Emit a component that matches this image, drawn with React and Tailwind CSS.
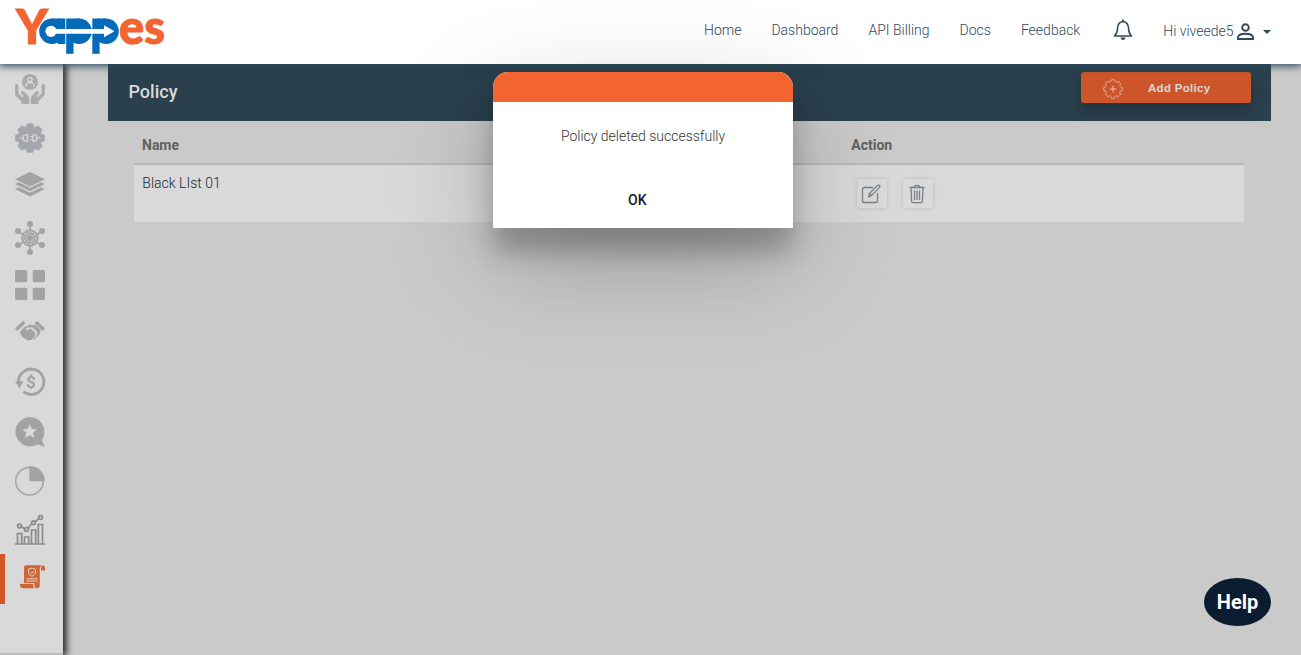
import React from "react";

const navItems = ["Home", "Dashboard", "API Billing", "Docs", "Feedback"];

function Logo() {
  return (
    <svg width="180" height="64" viewBox="0 0 180 64" overflow="visible" role="img" aria-label="Yappes">
      <g fontFamily="Lato, sans-serif" fontWeight="900" fontSize="48" stroke="#f26430" strokeWidth="1">
        <text x="16" y="43.500" fill="#f26430" textLength="32" lengthAdjust="spacingAndGlyphs">Y</text>
        <text x="119" y="43.500" fill="#f26430" textLength="46" lengthAdjust="spacingAndGlyphs">es</text>
      </g>
      <g fill="#056bb8">
        <circle cx="52" cy="31.3" r="12.8" />
        <circle cx="79" cy="31.3" r="12.8" />
        <circle cx="106" cy="31.3" r="12.8" />
        <rect x="58" y="18.500" width="7.300" height="25.500" />
        <rect x="66.200" y="18.500" width="7.300" height="35.300" />
        <rect x="92.300" y="18.500" width="7.300" height="35.300" />
        <rect x="52" y="18.500" width="8" height="8" />
        <rect x="73" y="18.500" width="7" height="8" />
        <rect x="98" y="18.500" width="8" height="8" />
      </g>
      <circle cx="51" cy="31.300" r="5.600" fill="#fff" />
      <path d="M50 28.900H104V25.300l10.500 6-10.500 6v-3.600H50z" fill="#fff" />
    </svg>
  );
}

function Gear({ r1, r2, teeth = 8, ...rest }) {
  const pts = [];
  for (let i = 0; i < teeth; i++) {
    const a = (i * 2 * Math.PI) / teeth;
    [[-0.3, r2], [-0.17, r1], [0.17, r1], [0.3, r2]].forEach(([d, r]) =>
      pts.push(`${(15 + r * Math.sin(a + d)).toFixed(2)},${(15 - r * Math.cos(a + d)).toFixed(2)}`)
    );
  }
  return <polygon points={pts.join(" ")} strokeLinejoin="round" {...rest} />;
}

const icons = [
  {
    box: "h-[49px]",
    art: (
      <>
        <circle cx="15" cy="8" r="8" fill="#ababab" />
        <circle cx="15" cy="5.6" r="2.1" fill="none" stroke="#d9d9d9" strokeWidth="1.3" />
        <path d="M11 13V11.5Q11 8.6 15 8.6T19 11.5V13" fill="none" stroke="#d9d9d9" strokeWidth="1.3" />
        <path d="M0 11.5q0-1.5 1.7-1.5t1.7 1.5v8l4.2 3.8 1.2-1-2.7-2.8q-.6-1.8 1.2-2.6l1.5.3 4.7 5q.7.8.7 2V30H6.5v-2.5L.7 21.8Q0 21 0 20zM30 11.5q0-1.5-1.7-1.5t-1.7 1.5v8l-4.2 3.8-1.2-1 2.7-2.8q.6-1.8-1.2-2.6l-1.5.3-4.7 5q-.7.8-.7 2V30h7.5v-2.5l5.8-5.7q.7-.8.7-1.8z" fill="#ababab" />
      </>
    ),
  },
  {
    box: "h-[46px]",
    art: (
      <>
        <Gear r1={14.2} r2={11.5} fill="#a5a7ad" stroke="#a5a7ad" strokeWidth="1.6" />
        <g fill="none" stroke="#d9d9d9" strokeWidth="1.2">
          <path d="M4.5 15H8M12.5 11.5H11Q8 12 8 15t3 3.5h1.5zM22 15h3.5M18 11.5h1q3 .5 3 3.5t-3 3.5h-1zM18 13.5h-3M18 16.5h-3" />
        </g>
      </>
    ),
  },
  {
    box: "h-[54px]",
    art: (
      <g fill="#a3a3a3">
        <path d="M15 3L30 10.3 15 17.5 0 10.3z" />
        <path d="M0 15l3.7-1.8L15 18.7l11.3-5.5L30 15 15 22.3z" />
        <path d="M0 20l3.7-1.8L15 23.7l11.3-5.5L30 20 15 27.5z" />
      </g>
    ),
  },
  {
    box: "h-[47px]",
    art: (
      <g stroke="#a3a3a3" fill="#a3a3a3">
        <path d="M15-1v32M2 8l26 15M28 8L2 23" strokeWidth="1.6" />
        <circle cx="15" cy="15" r="8.2" strokeWidth="1" />
        <circle cx="15" cy="15" r="6.2" fill="none" stroke="#d3d3d3" strokeWidth="1.2" strokeDasharray="2.5 1.2" />
        <circle cx="15" cy="15" r="3.6" fill="none" stroke="#cdcdcd" strokeWidth=".8" />
        <g stroke="none">
          <circle cx="15" cy="1" r="3" /><circle cx="15" cy="29" r="3" />
          <circle cx="3" cy="8" r="3" /><circle cx="27" cy="8" r="3" />
          <circle cx="3" cy="22" r="3" /><circle cx="27" cy="22" r="3" />
        </g>
      </g>
    ),
  },
  {
    box: "h-[46px]",
    art: (
      <g fill="#a3a3a3">
        <rect x="0" y="0" width="12.3" height="12.3" rx="1.6" /><rect x="17.7" y="0" width="12.3" height="12.3" rx="1.6" />
        <rect x="0" y="17.7" width="12.3" height="12.3" rx="1.6" /><rect x="17.7" y="17.7" width="12.3" height="12.3" rx="1.6" />
      </g>
    ),
  },
  {
    box: "h-[51px]",
    art: (
      <g fill="#a3a3a3">
        <path d="M1.2 13.8L9.3 6M20.700 6l8.100 7.800" stroke="#a3a3a3" strokeWidth="3.4" fill="none" />
        <path d="M5 15.5l5.3-5.2 3 .2-2.7 2.8q1.400 1.500 3.400.2l1.700-1 4.600 4.500q.9 1.500-.5 2.500l-.3 2-1.900 1-1 1.400-2 .2-1.800.7-5.500-4.100Q4.700 18 5 15.500z" />
        <path d="M13 9.3q2-1.500 4-.3h3.600l4.800 4.700q.6 5-4.200 7.700-.5 2.500-3.500 2.500 3-2 3.700-4.200 1.900-2.600-.1-4.700l-4.400-4-3.700 1z" />
      </g>
    ),
  },
  {
    box: "h-[50px]",
    art: (
      <>
        <path d="M3.500 15a12.700 12.700 0 1 1 4.800 9.700" fill="none" stroke="#a3a3a3" strokeWidth="2.800" />
        <path d="M0 14.200h8.500L4.400 21.500z" fill="#a3a3a3" />
        <text x="16" y="21" textAnchor="middle" fontFamily="Roboto, sans-serif" fontWeight="700" fontSize="17" fill="#a3a3a3">$</text>
      </>
    ),
  },
  {
    box: "h-[49px]",
    art: (
      <>
        <path d="M14.7 0a14.700 14.700 0 0 1 14.200 18.500q-.7 2.700-2 4.700L30 30l-7.300-2.700A14.700 14.700 0 1 1 14.700 0z" fill="#a3a3a3" />
        <path d="M14.700 7.200l2.100 4.700 5.200.5-3.900 3.400 1.200 5.200-4.600-2.700-4.600 2.700 1.200-5.200-3.900-3.400 5.200-.5z" fill="#d9d9d9" />
      </>
    ),
  },
  {
    box: "h-[49px]",
    art: (
      <>
        <circle cx="14.500" cy="15.300" r="13.800" fill="none" stroke="#a3a3a3" strokeWidth="1.500" />
        <path d="M14.300 0A15 15 0 0 1 29.800 15.200H14.300z" fill="#a3a3a3" />
      </>
    ),
  },
  {
    box: "h-[49px]",
    art: (
      <g fill="none" stroke="#8b8b8b" strokeWidth="1.700">
        <path d="M0 29h30M2.500 29V18.500H6.700V29M9.500 29V22h4.200v7M16.500 29V15h4.200v14M23.300 29V9.500h4.200V29" />
        <path d="M6 11.800l3.700 1.900M13 13l4-4.500M20.300 6.500l3.500-2.800" />
        <circle cx="4.500" cy="11" r="1.900" /><circle cx="11.500" cy="14.500" r="1.900" />
        <circle cx="18.500" cy="7.700" r="1.900" /><circle cx="25.500" cy="2.500" r="1.900" />
      </g>
    ),
  },
];

function PolicyIcon() {
  return (
    <svg width="26" height="24" viewBox="0 0 26 24">
      <path d="M4 18V2.500Q4 .3 6.300.3H22q-2.200 1-2.200 3V20q0 3.200-3 3.300-2.500 0-2.500-3.300v-2z" fill="#cf6435" />
      <path d="M0 18.800h13.300v1.500q0 2 1 3H3.200Q0 23 0 20.300zM21 5.500V3q0-2.500 2-2.500t2 2.200v2.800z" fill="#cf6435" />
      <g fill="none" stroke="#e0d2ca">
        <path d="M12 3l3.500 1.200V7.500Q15.300 10 12 11.400 8.700 10 8.500 7.500V4.200z" strokeWidth="1" />
        <path d="M10.500 7l1.200 1.300 2-2.300" strokeWidth="1" />
        <path d="M6.500 13.800h11M6.500 16h11" strokeWidth="1" />
        <path d="M0 18.500h13.600v2q.2 2.200 1.500 2.700" strokeWidth=".7" />
      </g>
    </svg>
  );
}

function Sidebar() {
  return (
    <aside className="relative z-10 flex w-[63px] shrink-0 flex-col border-b-2 border-[#bcbcbc] bg-[#d9d9d9] shadow-[3px_0_6px_1px_rgba(0,0,0,0.75)]">
      <div className="h-[10px] shrink-0" />
      {icons.map((icon, i) => (
        <div key={i} className={`${icon.box} shrink-0 pl-[15px]`}>
          <svg width="30" height="30" viewBox="0 0 30 30" overflow="visible">{icon.art}</svg>
        </div>
      ))}
      <div className="-mt-[10px] flex h-[50px] shrink-0 items-center border-l-5 border-[#d15728] pb-[5px] pl-[15px]">
        <PolicyIcon />
      </div>
    </aside>
  );
}

function Header() {
  return (
    <header className="relative z-20 flex h-16 shrink-0 items-center bg-white pr-[30px] text-[#2b4a5c] shadow-[0_1px_8px_1px_#2b4a5c]">
      <Logo />
      <nav className="-mt-1 ml-auto flex gap-[30px] text-[14px] font-light">
        {navItems.map((item) => <a key={item}>{item}</a>)}
      </nav>
      <svg className="-mt-1 ml-[33px]" width="20" height="22" viewBox="0 0 20 22" fill="none" stroke="#2b4a5c" strokeWidth="1.500" strokeLinejoin="round">
        <path d="M10 2.500Q15 3 15.500 9q0 5 3 8H1.500q3-3 3-8Q5 3 10 2.500z" />
        <path d="M10 .5v2" strokeWidth="1.800" />
        <path d="M7.500 18.500h5q-.5 2.500-2.500 2.500t-2.500-2.500z" fill="#2b4a5c" stroke="none" />
      </svg>
      <span className="-mt-0.5 ml-[30px] text-[14px] font-light">Hi viveede5</span>
      <svg className="-mt-px ml-[3px]" width="17" height="17" viewBox="0 0 17 17" fill="none" stroke="#2b4a5c" strokeWidth="1.900">
        <circle cx="8.500" cy="4.500" r="3.300" />
        <path d="M1 16v-1.700Q1.500 10.800 8.500 10.800T16 14.300V16z" />
      </svg>
      <svg className="ml-[9.5px]" width="8" height="4" viewBox="0 0 8 4"><path d="M0 0h8L4 4z" fill="#2b4a5c" /></svg>
    </header>
  );
}

function ActionButton({ children }) {
  return (
    <button className="flex h-[29px] w-[30px] items-center justify-center rounded-[3px] bg-[#dadada] shadow-[0_0_4px_rgba(0,0,0,0.15)]">
      <svg className="-ml-px" width="20" height="20" viewBox="0 0 20 20" fill="none" stroke="#7b8087" strokeWidth="1.300" strokeLinejoin="round">{children}</svg>
    </button>
  );
}

function PolicyPanel() {
  return (
    <main className="ml-[45px] w-[1163px]">
      <div className="flex h-[57px] justify-between bg-[#2a404d] pl-[20.5px] pr-5">
        <h1 className="pt-[15px] text-[18px] font-medium leading-[26px] text-[#d9d9d9]">Policy</h1>
        <button className="mt-2 flex h-[31px] w-[170px] items-center rounded-[3px] bg-[#cd5529] pl-[22px] font-['Liberation_Sans',sans-serif] text-[11.5px] font-bold tracking-[0.300px] text-[#d9d9d9] shadow-[0_8px_16px_rgba(0,0,0,0.2)]">
          <svg className="mt-[2px]" width="20" height="20" viewBox="0 0 30 30">
            <Gear r1={14} r2={11.500} fill="none" stroke="#dfb5a5" strokeWidth="1.400" />
            <path d="M15 10v10M10 15h10" stroke="#e3c4b8" strokeWidth="1.500" />
          </svg>
          <span className="ml-[25px] mt-[2px]">Add Policy</span>
        </button>
      </div>
      <div className="mx-[26px] w-[1110px]">
        <div className="flex h-[44px] items-center border-b-2 border-[#b9b9b9] px-2 pt-[7px] text-[14px] font-bold text-[#606060]">
          <span className="w-[709.3px]">Name</span>
          <span>Action</span>
        </div>
        <div className="flex h-[57px] bg-[#d9d9d9] px-2 text-[14px] text-[#2a4250]">
          <span className="w-[714.5px] pl-[0.3px] pt-2 font-light text-[#152c3a]">Black LIst 01</span>
          <div className="flex gap-4 pt-[14px]">
            <ActionButton>
              <path d="M12 3.500H3.500Q1.500 3.500 1.500 5.500V16.500Q1.500 18.500 3.500 18.500H14.500Q16.500 18.500 16.500 16.500V9" />
              <path d="M7.500 13l1-3.500 8.200-8.200q1-.5 1.700.2.800.9.200 1.900l-8.100 8.200zM8.500 9.500l2 2.100" />
            </ActionButton>
            <ActionButton>
              <path d="M2.500 3.500h15M7 3.300q0-2 3-2t3 2M4 3.800l.6 13.700q.1 1.200 1.400 1.200h8q1.300 0 1.400-1.200L16 3.800M7.500 6.500v9.500M10 6.500v9.500M12.500 6.500v9.500" />
            </ActionButton>
          </div>
        </div>
      </div>
    </main>
  );
}

function Dialog() {
  return (
    <div role="dialog" className="absolute left-[493px] top-[72px] z-30 flex h-[156px] w-[300px] flex-col rounded-t-[15px] bg-white shadow-[0_24px_24px_0_rgba(0,0,0,0.22),0_32px_100px_0_rgba(0,0,0,0.25)]">
      <div className="h-[30px] rounded-t-[15px] bg-[#f26430]" />
      <p className="mt-6 text-center text-[14px] font-light leading-5 text-[#333]">Policy deleted successfully</p>
      <button className="ml-[135px] mt-11 w-fit text-[14px] font-medium leading-5 text-[#0b1b30]">OK</button>
    </div>
  );
}

export default function App() {
  return (
    <div className="relative flex h-[655px] w-[1301px] flex-col overflow-hidden bg-[#cacaca] font-[Roboto,sans-serif]">
      <Header />
      <div className="flex min-h-0 flex-1">
        <Sidebar />
        <PolicyPanel />
      </div>
      <Dialog />
      <button className="absolute left-[1204px] top-[578px] z-30 h-12 w-[67px] rounded-[50%] bg-[#0b1b30] text-[20px] font-bold text-white">Help</button>
    </div>
  );
}
